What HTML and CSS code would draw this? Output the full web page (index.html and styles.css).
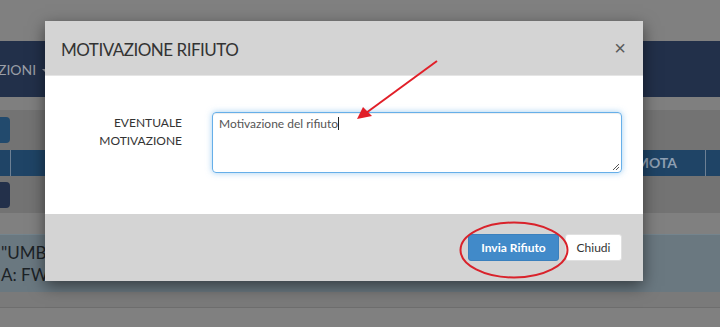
FILE: index.html
```html
<!DOCTYPE html>
<html lang="it">
<head>
    <meta charset="UTF-8">
    <meta name="viewport" content="width=device-width, initial-scale=1.0">
    <title>Motivazione rifiuto</title>
    <link rel="stylesheet" href="styles.css">
</head>
<body>
    <div class="page">
        <div class="topbar"></div>
        <div class="navbar">
            <span class="nav-item">ZIONI <span class="caret"></span></span>
        </div>
        <div class="spacer"></div>
        <div class="toolbar">
            <span class="btn-stub blue"></span>
        </div>
        <div class="table-head">
            <span class="col first"></span>
            <span class="col wide">REMOTA</span>
            <span class="col last"></span>
        </div>
        <div class="table-row">
            <span class="btn-stub dark"></span>
        </div>
        <div class="spacer small"></div>
        <div class="info-panel">
            <div>"UMBERTO</div>
            <div>A: FWD</div>
        </div>
        <div class="bottom-strip"></div>
        <div class="bottom-rest"></div>
    </div>

    <div class="modal">
        <div class="modal-header">
            <h4>MOTIVAZIONE RIFIUTO</h4>
            <span class="close">&times;</span>
        </div>
        <div class="modal-body">
            <div class="form-row">
                <label class="control-label">EVENTUALE<br>MOTIVAZIONE</label>
                <div class="textarea">
                    Motivazione del rifiuto<span class="cursor"></span>
                    <svg class="grip" width="9" height="9" viewBox="0 0 9 9">
                        <path d="M8 2 L2 8 M8 5 L5 8" stroke="#555" stroke-width="1"/>
                    </svg>
                </div>
            </div>
        </div>
        <div class="modal-footer">
            <button class="btn btn-primary">Invia Rifiuto</button>
            <button class="btn btn-default">Chiudi</button>
        </div>
    </div>

    <!-- annotations drawn over the screenshot -->
    <svg class="annotations" width="720" height="327" viewBox="0 0 720 327">
        <line x1="437" y1="61" x2="366" y2="113" stroke="#e11f28" stroke-width="2"/>
        <polygon points="357,119 363,107 372,116" fill="#e11f28"/>
        <ellipse cx="514" cy="250" rx="53.5" ry="27.5" fill="none" stroke="#d9222b" stroke-width="2"/>
    </svg>
</body>
</html>
```

FILE: styles.css
```css
body {
    margin: 0;
    width: 720px;
    height: 327px;
    overflow: hidden;
    font-family: Lato, "Liberation Sans", sans-serif;
    background-color: #808080;
    position: relative;
}
.page {
    display: flex;
    flex-direction: column;
}
.topbar {
    height: 41px;
    background-color: #808080;
}
.navbar {
    height: 56px;
    background-color: #22304a;
    display: flex;
    align-items: center;
}
.nav-item {
    color: #9a9ea6;
    font-size: 14px;
    margin-left: -2px;
}
.caret {
    display: inline-block;
    width: 0;
    height: 0;
    border-left: 4px solid transparent;
    border-right: 4px solid transparent;
    border-top: 4px solid #9a9ea6;
    vertical-align: middle;
    margin-left: 2px;
}
.spacer {
    height: 13px;
    background-color: #7f7f7f;
}
.spacer.small {
    height: 21px;
    background-color: #808080;
}
.toolbar {
    height: 40px;
    background-color: #737373;
    display: flex;
    align-items: center;
}
.btn-stub {
    display: block;
    width: 10px;
    height: 26px;
    border-radius: 0 4px 4px 0;
}
.btn-stub.blue {
    background-color: #224a6d;
}
.btn-stub.dark {
    background-color: #23304a;
}
.table-head {
    height: 26px;
    background-color: #1f4466;
    display: flex;
}
.col {
    border-right: 1px solid #6d8094;
    color: #8e9fb2;
    font-size: 14px;
    font-weight: bold;
    line-height: 26px;
}
.col.first {
    width: 10px;
}
.col.wide {
    width: 695px;
    text-align: right;
    padding-right: 28px;
    box-sizing: border-box;
}
.col.last {
    border-right: none;
    flex: 1;
}
.table-row {
    height: 37px;
    background-color: #737373;
    display: flex;
    align-items: center;
}
.info-panel {
    height: 58px;
    background-color: #6a7880;
    border-top: 1px solid #74848d;
    color: #1c2226;
    font-size: 17px;
    line-height: 22px;
    padding: 7px 0 0 1px;
    box-sizing: border-box;
}
.bottom-strip {
    height: 15px;
    background-color: #7a7a7a;
    border-bottom: 1px solid #6e6e6e;
}
.bottom-rest {
    height: 20px;
    background-color: #808080;
}

.modal {
    position: absolute;
    left: 45px;
    top: 21px;
    width: 598px;
    background: white;
    box-shadow: 0 5px 15px rgba(0,0,0,0.5);
}
.modal-header {
    height: 54px;
    background-color: #d4d4d4;
    border-bottom: 1px solid #e5e5e5;
    display: flex;
    align-items: center;
    justify-content: space-between;
    padding: 0 17px 0 16px;
}
.modal-header h4 {
    margin: 0;
    font-size: 17px;
    font-weight: normal;
    letter-spacing: -0.5px;
    color: #333;
    padding-top: 2px;
}
.close {
    color: #5a5a5a;
    font-size: 20px;
    line-height: 1;
    font-family: "Liberation Sans", sans-serif;
}
.modal-body {
    height: 138px;
    padding: 36px 21px 0 15px;
    box-sizing: border-box;
}
.form-row {
    display: flex;
    gap: 30px;
}
.control-label {
    width: 122px;
    text-align: right;
    font-size: 12px;
    line-height: 18px;
    color: #333;
    padding-top: 2px;
}
.textarea {
    position: relative;
    flex: 1;
    height: 61px;
    border: 1px solid #66afe9;
    border-radius: 4px;
    box-shadow: inset 0 1px 1px rgba(0,0,0,0.075), 0 0 6px rgba(102,175,233,0.6);
    box-sizing: border-box;
    padding: 3px 6px;
    font-size: 12px;
    line-height: 16px;
    color: #555;
}
.cursor {
    display: inline-block;
    width: 1px;
    height: 13px;
    background: #222;
    vertical-align: -2px;
}
.grip {
    position: absolute;
    right: 1px;
    bottom: 1px;
}
.modal-footer {
    height: 67px;
    background-color: #d4d4d4;
    display: flex;
    justify-content: flex-end;
    align-items: center;
    gap: 6px;
    padding: 0 21px 0 0;
    box-sizing: border-box;
}
.btn {
    font-family: Lato, "Liberation Sans", sans-serif;
    font-size: 12px;
    border-radius: 3px;
    height: 27px;
    cursor: pointer;
}
.btn-primary {
    background-color: #418ac9;
    border: 1px solid #3a80bd;
    color: white;
    font-weight: bold;
    width: 91px;
}
.btn-default {
    background-color: white;
    border: 1px solid #e0e0e0;
    color: #333;
    width: 57px;
}
.annotations {
    position: absolute;
    left: 0;
    top: 0;
    pointer-events: none;
}
```
